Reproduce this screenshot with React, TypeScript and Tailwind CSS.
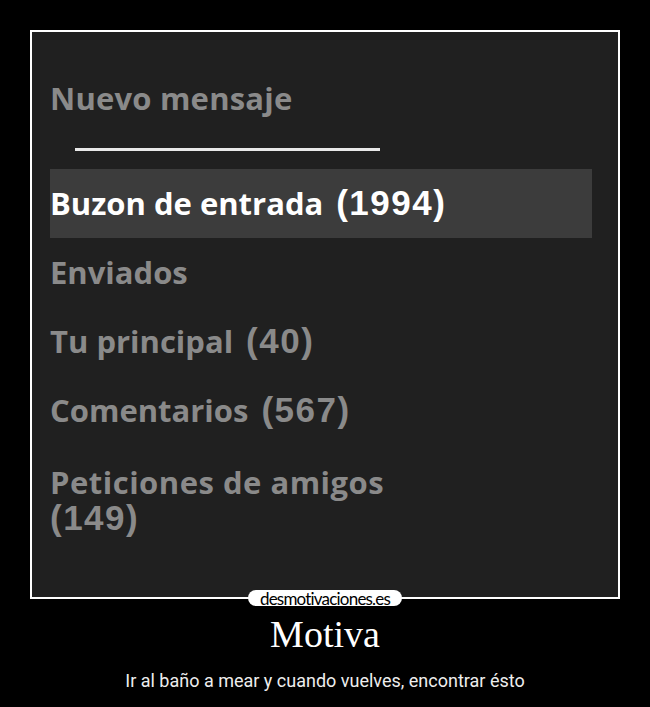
const LABEL = '"Open Sans", "DejaVu Sans", sans-serif'
const NUM = '"Liberation Sans", Arial, sans-serif'

function Item({ label, count, className }: { label: string; count?: string; className: string }) {
  return (
    <span className={className}>
      <span style={{ fontFamily: LABEL }}>{label}</span>
      {count && (
        <span className="ml-[13px] text-[35px] tracking-[1.5px]" style={{ fontFamily: NUM }}>
          {count}
        </span>
      )}
    </span>
  )
}

export default function App() {
  const items = [
    { label: 'Enviados' },
    { label: 'Tu principal', count: '(40)' },
    { label: 'Comentarios', count: '(567)' },
  ]
  return (
    <div className="w-[650px] h-[707px] bg-black flex flex-col items-center">
      {/* framed picture */}
      <div className="mt-[30px] w-[590px] h-[569px] border-2 border-white bg-[#202020] flex flex-col shrink-0 relative">
        <div className="pl-[18px] pt-[46px] text-[31px] font-bold leading-[40px] text-[#8a8a8a] tracking-[0.2px]" style={{ fontFamily: LABEL }}>
          Nuevo mensaje
        </div>
        <div className="ml-[43px] mt-[30px] w-[305px] h-[3px] bg-[#e8e8e8]" />
        <div className="ml-[18px] mt-[18px] w-[542px] h-[69px] bg-[#3c3c3c] flex items-center">
          <Item label="Buzon de entrada" count="(1994)" className="text-[31px] font-bold text-white" />
        </div>
        <div className="pl-[18px] flex flex-col">
          {items.map((it) => (
            <div key={it.label} className="h-[69px] flex items-center">
              <Item label={it.label} count={it.count} className="text-[31px] font-bold text-[#8a8a8a]" />
            </div>
          ))}
          <div className="mt-[20px] text-[31px] font-bold text-[#8a8a8a] flex flex-col">
            <span className="leading-[35px] tracking-[0.5px]" style={{ fontFamily: LABEL }}>Peticiones de amigos</span>
            <span className="text-[35px] leading-[35px] tracking-[1.5px]" style={{ fontFamily: NUM }}>(149)</span>
          </div>
        </div>
      </div>
      {/* logo pill */}
      <div className="-mt-[9px] h-[16px] w-[154px] bg-white rounded-full flex items-center justify-center relative">
        <span className="text-[17px] leading-none text-black tracking-[-0.8px]" style={{ fontFamily: 'Lato, sans-serif' }}>desmotivaciones.es</span>
      </div>
      <div className="mt-[6px] text-[38px] leading-[44px] text-white" style={{ fontFamily: '"Liberation Serif", serif' }}>Motiva</div>
      <div className="mt-[11px] text-[18px] text-[#eeeeee]" style={{ fontFamily: 'Roboto, sans-serif' }}>
        Ir al baño a mear y cuando vuelves, encontrar ésto
      </div>
    </div>
  )
}
